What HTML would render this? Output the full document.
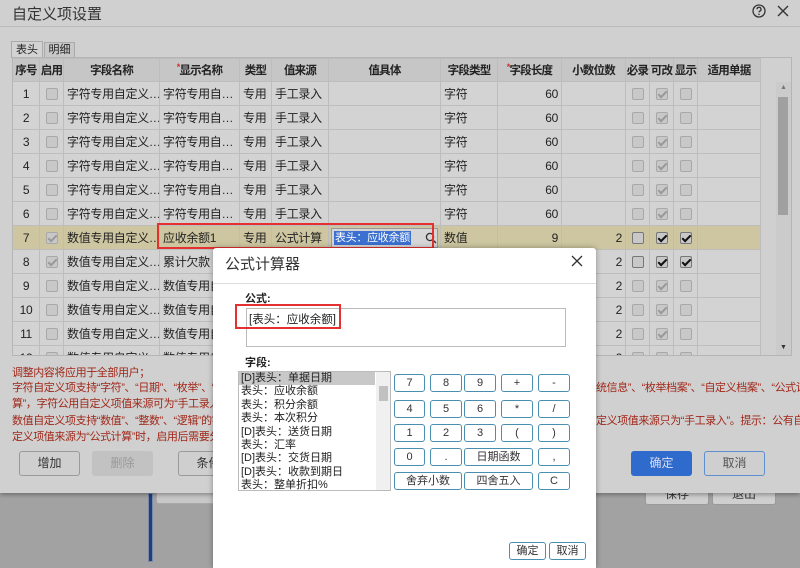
<!DOCTYPE html>
<html><head><meta charset="utf-8">
<style>
*{box-sizing:border-box;margin:0;padding:0}
body{width:800px;height:562px;overflow:hidden;background:#a2a2a2;font-family:"Liberation Sans","Noto Sans CJK SC",sans-serif;font-size:12px;color:#222;position:relative}
.abs{position:absolute}
#outer{left:0;top:0;width:800px;height:493px;background:#d0d0d0;box-shadow:0 2px 4px rgba(0,0,0,.3)}
table{border-collapse:collapse;table-layout:fixed;position:absolute;left:12px;top:58px;width:748px}
td,th{border:1px solid #bdbdbd;height:24px;padding:0 3px;white-space:nowrap;overflow:hidden;font-size:12px}
td{letter-spacing:-0.3px}
th{background:#c6c6c6;font-weight:bold;height:23px;color:#222;text-align:center;padding:0;font-size:11.5px;letter-spacing:-0.8px}
td{background:#d3d3d3}
tr.hl td{background:#cdc6a0}
.c{text-align:center}.r{text-align:right}
.cb{display:inline-block;width:12px;height:12px;border:1px solid #a8a8a8;border-radius:2px;background:#c8c8c8;vertical-align:middle;position:relative}
.cb.k::after{content:"";position:absolute;left:3px;top:0px;width:3px;height:7px;border:solid #999;border-width:0 2px 2px 0;transform:rotate(45deg)}
.cb.d{border-color:#777}
.cb.d.k::after{border-color:#111}
.star{color:#c33;font-size:9px;vertical-align:top}
.nl{position:absolute;color:#a0281a;font-size:11px;line-height:16px;white-space:nowrap;letter-spacing:-0.4px}
.btn{position:absolute;height:25px;border:1px solid #9a9a9a;border-radius:3px;background:#cfcfcf;text-align:center;line-height:23px;font-size:12px;color:#333}
#modal{left:213px;top:248px;width:383px;height:320px;background:#fff;border-radius:3px 3px 0 0;box-shadow:0 0 6px rgba(0,0,0,.35)}
.kb{position:absolute;height:18px;border:1px solid #4b8fb0;border-radius:3px;background:#fff;text-align:center;line-height:16px;font-size:11px;color:#333}
.li{height:13.4px;line-height:13.4px;font-size:11px;padding-left:2px;white-space:nowrap}
</style></head><body>

<div class="abs" style="left:148px;top:493px;width:5px;height:69px;background:#1f3f7a;border:1px solid #7a8aa8"></div>
<div class="btn" style="left:156px;top:484px;width:60px;height:20px;background:#c8c8c8;border-color:#aaa"></div>
<div class="btn" style="left:645px;top:484px;width:64px;height:21px;line-height:19px">保存</div>
<div class="btn" style="left:712px;top:484px;width:64px;height:21px;line-height:19px">退出</div>

<div id="outer" class="abs">
 <div class="abs" style="left:12px;top:3px;font-size:15px;color:#333">自定义项设置</div>
 <div class="abs" style="left:0;top:26px;width:800px;height:1px;background:#bcbcbc"></div>
 <svg class="abs" style="left:752px;top:4px" width="14" height="14" viewBox="0 0 14 14"><circle cx="7" cy="7" r="6" fill="none" stroke="#333" stroke-width="1.3"/><path d="M5 5.3a2 2 0 1 1 2.6 1.9c-.5.2-.6.5-.6 1.2" fill="none" stroke="#333" stroke-width="1.3"/><circle cx="7" cy="10.3" r=".8" fill="#333"/></svg>
 <svg class="abs" style="left:777px;top:5px" width="12" height="12" viewBox="0 0 12 12"><path d="M1 1L11 11M11 1L1 11" stroke="#333" stroke-width="1.4"/></svg>
 <div class="abs" style="left:11px;top:41px;width:32px;height:17px;border:1px solid #aaa;border-bottom:none;background:#d3d3d3;text-align:center;line-height:16px;font-size:11px">表头</div>
 <div class="abs" style="left:44px;top:42px;width:31px;height:16px;border:1px solid #aaa;border-bottom:none;background:#c8c8c8;text-align:center;line-height:15px;font-size:11px">明细</div>
 <div class="abs" style="left:12px;top:57px;width:780px;height:299px;border:1px solid #b5b5b5;background:#d0d0d0;overflow:hidden">
 <table style="left:-1px;top:0">
 <colgroup><col style="width:27px"><col style="width:24px"><col style="width:96px"><col style="width:80px"><col style="width:32px"><col style="width:57px"><col style="width:112px"><col style="width:57px"><col style="width:64px"><col style="width:64px"><col style="width:24px"><col style="width:24px"><col style="width:24px"><col style="width:63px"></colgroup>
 <tr><th>序号</th><th>启用</th><th>字段名称</th><th><span class="star">*</span>显示名称</th><th>类型</th><th>值来源</th><th>值具体</th><th>字段类型</th><th><span class="star">*</span>字段长度</th><th>小数位数</th><th>必录</th><th>可改</th><th>显示</th><th>适用单据</th></tr>
 <tr><td class="c">1</td><td class="c"><span class="cb"></span></td><td>字符专用自定义…</td><td>字符专用自…</td><td>专用</td><td>手工录入</td><td></td><td>字符</td><td class="r">60</td><td></td><td class="c"><span class="cb"></span></td><td class="c"><span class="cb k"></span></td><td class="c"><span class="cb"></span></td><td></td></tr>
 <tr><td class="c">2</td><td class="c"><span class="cb"></span></td><td>字符专用自定义…</td><td>字符专用自…</td><td>专用</td><td>手工录入</td><td></td><td>字符</td><td class="r">60</td><td></td><td class="c"><span class="cb"></span></td><td class="c"><span class="cb k"></span></td><td class="c"><span class="cb"></span></td><td></td></tr>
 <tr><td class="c">3</td><td class="c"><span class="cb"></span></td><td>字符专用自定义…</td><td>字符专用自…</td><td>专用</td><td>手工录入</td><td></td><td>字符</td><td class="r">60</td><td></td><td class="c"><span class="cb"></span></td><td class="c"><span class="cb k"></span></td><td class="c"><span class="cb"></span></td><td></td></tr>
 <tr><td class="c">4</td><td class="c"><span class="cb"></span></td><td>字符专用自定义…</td><td>字符专用自…</td><td>专用</td><td>手工录入</td><td></td><td>字符</td><td class="r">60</td><td></td><td class="c"><span class="cb"></span></td><td class="c"><span class="cb k"></span></td><td class="c"><span class="cb"></span></td><td></td></tr>
 <tr><td class="c">5</td><td class="c"><span class="cb"></span></td><td>字符专用自定义…</td><td>字符专用自…</td><td>专用</td><td>手工录入</td><td></td><td>字符</td><td class="r">60</td><td></td><td class="c"><span class="cb"></span></td><td class="c"><span class="cb k"></span></td><td class="c"><span class="cb"></span></td><td></td></tr>
 <tr><td class="c">6</td><td class="c"><span class="cb"></span></td><td>字符专用自定义…</td><td>字符专用自…</td><td>专用</td><td>手工录入</td><td></td><td>字符</td><td class="r">60</td><td></td><td class="c"><span class="cb"></span></td><td class="c"><span class="cb k"></span></td><td class="c"><span class="cb"></span></td><td></td></tr>
 <tr class="hl"><td class="c">7</td><td class="c"><span class="cb k"></span></td><td>数值专用自定义…</td><td>应收余额1</td><td>专用</td><td>公式计算</td><td style="padding:0 2px"><div style="position:relative;height:20px;border:1px solid #999;background:#d6d6d6;overflow:hidden"><span style="position:absolute;left:2px;top:2px;background:#3b6fd0;color:#fff;line-height:14px;font-size:11px;padding:0 1px">表头：应收余额</span><svg style="position:absolute;right:0;top:3px" width="12" height="12" viewBox="0 0 12 12"><circle cx="5" cy="5" r="3.6" fill="none" stroke="#333" stroke-width="1.3"/><path d="M7.6 7.6L11 11" stroke="#333" stroke-width="1.4"/></svg></div></td><td>数值</td><td class="r">9</td><td class="r">2</td><td class="c"><span class="cb d"></span></td><td class="c"><span class="cb d k"></span></td><td class="c"><span class="cb d k"></span></td><td></td></tr>
 <tr><td class="c">8</td><td class="c"><span class="cb k"></span></td><td>数值专用自定义…</td><td>累计欠款</td><td>专用</td><td>公式计算</td><td></td><td>数值</td><td class="r">9</td><td class="r">2</td><td class="c"><span class="cb d"></span></td><td class="c"><span class="cb d k"></span></td><td class="c"><span class="cb d k"></span></td><td></td></tr>
 <tr><td class="c">9</td><td class="c"><span class="cb"></span></td><td>数值专用自定义…</td><td>数值专用自…</td><td>专用</td><td>手工录入</td><td></td><td>数值</td><td class="r">9</td><td class="r">2</td><td class="c"><span class="cb"></span></td><td class="c"><span class="cb k"></span></td><td class="c"><span class="cb"></span></td><td></td></tr>
 <tr><td class="c">10</td><td class="c"><span class="cb"></span></td><td>数值专用自定义…</td><td>数值专用自…</td><td>专用</td><td>手工录入</td><td></td><td>数值</td><td class="r">9</td><td class="r">2</td><td class="c"><span class="cb"></span></td><td class="c"><span class="cb k"></span></td><td class="c"><span class="cb"></span></td><td></td></tr>
 <tr><td class="c">11</td><td class="c"><span class="cb"></span></td><td>数值专用自定义…</td><td>数值专用自…</td><td>专用</td><td>手工录入</td><td></td><td>数值</td><td class="r">9</td><td class="r">2</td><td class="c"><span class="cb"></span></td><td class="c"><span class="cb k"></span></td><td class="c"><span class="cb"></span></td><td></td></tr>
 <tr><td class="c">12</td><td class="c"><span class="cb"></span></td><td>数值专用自定义…</td><td>数值专用自…</td><td>专用</td><td>手工录入</td><td></td><td>数值</td><td class="r">9</td><td class="r">2</td><td class="c"><span class="cb"></span></td><td class="c"><span class="cb k"></span></td><td class="c"><span class="cb"></span></td><td></td></tr>
 </table>
 <div class="abs" style="left:763px;top:24px;width:15px;height:274px;background:#cbcbcb"></div>
 <div class="abs" style="left:765px;top:39px;width:10px;height:118px;background:#a0a0a0"></div>
 <div class="abs" style="left:767px;top:26px;font-size:7px;color:#777">▲</div>
 <div class="abs" style="left:767px;top:286px;font-size:7px;color:#333">▼</div>
 </div>
 <div class="abs" style="left:157px;top:223px;width:277px;height:26px;border:2px solid #e53030"></div>
 <div class="nl" style="left:12px;top:365px">调整内容将应用于全部用户；</div>
 <div class="nl" style="left:12px;top:380px">字符自定义项支持“字符”、“日期”、“枚举”、“引用”</div>
 <div class="nl" style="left:12px;top:396px">算”，字符公用自定义项值来源可为“手工录入”、</div>
 <div class="nl" style="left:12px;top:413px">数值自定义项支持“数值”、“整数”、“逻辑”的字段</div>
 <div class="nl" style="left:12px;top:429px">定义项值来源为“公式计算”时，启用后需要分别设</div>
 <div class="nl" style="left:596px;top:380px">统信息”、“枚举档案”、“自定义档案”、“公式计</div>
 <div class="nl" style="left:596px;top:413px">定义项值来源只为“手工录入”。提示：公有自</div>
 <div class="btn" style="left:19px;top:451px;width:61px">增加</div>
 <div class="btn" style="left:92px;top:451px;width:61px;background:#c2c2c2;border-color:#c2c2c2;color:#999">删除</div>
 <div class="btn" style="left:178px;top:451px;width:61px">条件</div>
 <div class="btn" style="left:631px;top:451px;width:61px;background:#2e6bcc;border-color:#2e6bcc;color:#dde">确定</div>
 <div class="btn" style="left:704px;top:451px;width:61px;border-color:#5f8fd0;color:#555">取消</div>
</div>

<div id="modal" class="abs">
 <div class="abs" style="left:12px;top:5px;font-size:15px;color:#333">公式计算器</div>
 <svg class="abs" style="left:358px;top:7px" width="12" height="12" viewBox="0 0 12 12"><path d="M1 1L11 11M11 1L1 11" stroke="#333" stroke-width="1.3"/></svg>
 <div class="abs" style="left:0;top:35px;width:383px;height:1px;background:#ddd"></div>
 <div class="abs" style="left:32px;top:42px;font-size:11px;font-weight:bold">公式:</div>
 <div class="abs" style="left:33px;top:60px;width:320px;height:39px;border:1px solid #bbb"></div>
 <div class="abs" style="left:36px;top:63px;font-size:11.5px">[表头：应收余额]</div>
 <div class="abs" style="left:22px;top:56px;width:106px;height:25px;border:2px solid #e53030"></div>
 <div class="abs" style="left:32px;top:106px;font-size:11px;font-weight:bold">字段:</div>
 <div class="abs" style="left:25px;top:123px;width:153px;height:120px;border:1px solid #bbb;overflow:hidden">
  <div class="li" style="background:#c8c8c8;width:136px">[D]表头：单据日期</div>
  <div class="li">表头：应收余额</div><div class="li">表头：积分余额</div><div class="li">表头：本次积分</div>
  <div class="li">[D]表头：送货日期</div><div class="li">表头：汇率</div><div class="li">[D]表头：交货日期</div>
  <div class="li">[D]表头：收款到期日</div><div class="li">表头：整单折扣%</div>
  <div class="abs" style="left:137px;top:0;width:14px;height:118px;background:#f0f0f0"></div>
  <div class="abs" style="left:140px;top:14px;width:9px;height:15px;background:#c1c1c1"></div>
 </div>
 <div class="kb" style="left:181px;top:126px;width:31px">7</div><div class="kb" style="left:217px;top:126px;width:32px">8</div><div class="kb" style="left:251px;top:126px;width:32px">9</div><div class="kb" style="left:288px;top:126px;width:32px">+</div><div class="kb" style="left:325px;top:126px;width:32px">-</div>
 <div class="kb" style="left:181px;top:152px;width:31px">4</div><div class="kb" style="left:217px;top:152px;width:32px">5</div><div class="kb" style="left:251px;top:152px;width:32px">6</div><div class="kb" style="left:288px;top:152px;width:32px">*</div><div class="kb" style="left:325px;top:152px;width:32px">/</div>
 <div class="kb" style="left:181px;top:176px;width:31px">1</div><div class="kb" style="left:217px;top:176px;width:32px">2</div><div class="kb" style="left:251px;top:176px;width:32px">3</div><div class="kb" style="left:288px;top:176px;width:32px">(</div><div class="kb" style="left:325px;top:176px;width:32px">)</div>
 <div class="kb" style="left:181px;top:200px;width:31px">0</div><div class="kb" style="left:217px;top:200px;width:32px">.</div><div class="kb" style="left:251px;top:200px;width:69px">日期函数</div><div class="kb" style="left:325px;top:200px;width:32px">,</div>
 <div class="kb" style="left:181px;top:224px;width:68px">舍弃小数</div><div class="kb" style="left:251px;top:224px;width:69px">四舍五入</div><div class="kb" style="left:325px;top:224px;width:32px">C</div>
 <div class="kb" style="left:296px;top:294px;width:37px">确定</div><div class="kb" style="left:336px;top:294px;width:37px">取消</div>
</div>
</body></html>
